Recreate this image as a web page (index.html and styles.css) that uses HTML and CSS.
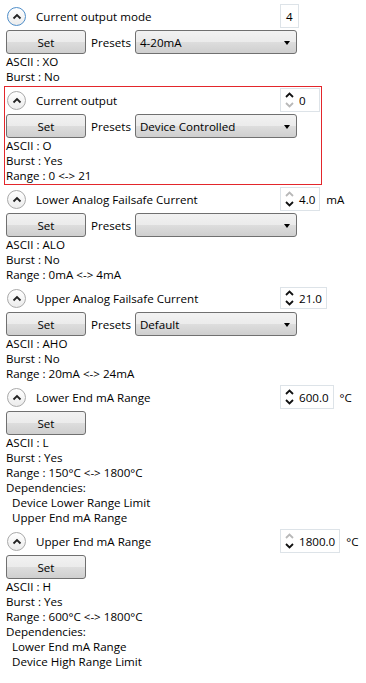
FILE: index.html
```html
<!DOCTYPE html>
<html lang="en">
<head>
  <meta charset="UTF-8" />
  <meta name="viewport" content="width=device-width, initial-scale=1.0"/>
  <title>Device Parameters</title>
  <link rel="stylesheet" href="styles.css">
</head>
<body>
  <div class="params">

    <div class="param">
      <div class="head">
        <span class="toggle focused"><svg width="10" height="7" viewBox="0 0 10 7"><path d="M1.5 5.5 L5 2 L8.5 5.5" /></svg></span>
        <span class="title">Current output mode</span>
        <span class="field plain">4</span>
      </div>
      <div class="controls">
        <button class="set">Set</button>
        <span class="presets">Presets</span>
        <div class="select">4-20mA<span class="caret"></span></div>
      </div>
      <div class="info">ASCII : XO</div>
      <div class="info">Burst : No</div>
    </div>

    <div class="param selected">
      <div class="head">
        <span class="toggle"><svg width="10" height="7" viewBox="0 0 10 7"><path d="M1.5 5.5 L5 2 L8.5 5.5" /></svg></span>
        <span class="title">Current output</span>
        <span class="field">
          <span class="spin"><svg width="9" height="18" viewBox="0 0 9 18"><path d="M1 6 L4.5 2.5 L8 6" /><path class="off" d="M1 12 L4.5 15.5 L8 12" /></svg></span>
          <span class="num">0</span>
        </span>
      </div>
      <div class="controls">
        <button class="set">Set</button>
        <span class="presets">Presets</span>
        <div class="select">Device Controlled<span class="caret"></span></div>
      </div>
      <div class="info">ASCII : O</div>
      <div class="info">Burst : Yes</div>
      <div class="info">Range : 0 &lt;-&gt; 21</div>
    </div>

    <div class="param">
      <div class="head">
        <span class="toggle"><svg width="10" height="7" viewBox="0 0 10 7"><path d="M1.5 5.5 L5 2 L8.5 5.5" /></svg></span>
        <span class="title">Lower Analog Failsafe Current</span>
        <span class="field">
          <span class="spin"><svg width="9" height="18" viewBox="0 0 9 18"><path class="off" d="M1 6 L4.5 2.5 L8 6" /><path d="M1 12 L4.5 15.5 L8 12" /></svg></span>
          <span class="num">4.0</span>
        </span>
        <span class="unit">mA</span>
      </div>
      <div class="controls">
        <button class="set">Set</button>
        <span class="presets">Presets</span>
        <div class="select"><span class="caret"></span></div>
      </div>
      <div class="info">ASCII : ALO</div>
      <div class="info">Burst : No</div>
      <div class="info">Range : 0mA &lt;-&gt; 4mA</div>
    </div>

    <div class="param">
      <div class="head">
        <span class="toggle"><svg width="10" height="7" viewBox="0 0 10 7"><path d="M1.5 5.5 L5 2 L8.5 5.5" /></svg></span>
        <span class="title">Upper Analog Failsafe Current</span>
        <span class="field short">
          <span class="spin"><svg width="9" height="18" viewBox="0 0 9 18"><path d="M1 6 L4.5 2.5 L8 6" /><path d="M1 12 L4.5 15.5 L8 12" /></svg></span>
          <span class="num">21.0</span>
        </span>
      </div>
      <div class="controls">
        <button class="set">Set</button>
        <span class="presets">Presets</span>
        <div class="select">Default<span class="caret"></span></div>
      </div>
      <div class="info">ASCII : AHO</div>
      <div class="info">Burst : No</div>
      <div class="info">Range : 20mA &lt;-&gt; 24mA</div>
    </div>

    <div class="param">
      <div class="head">
        <span class="toggle"><svg width="10" height="7" viewBox="0 0 10 7"><path d="M1.5 5.5 L5 2 L8.5 5.5" /></svg></span>
        <span class="title">Lower End mA Range</span>
        <span class="field">
          <span class="spin"><svg width="9" height="18" viewBox="0 0 9 18"><path d="M1 6 L4.5 2.5 L8 6" /><path d="M1 12 L4.5 15.5 L8 12" /></svg></span>
          <span class="num">600.0</span>
        </span>
        <span class="unit">°C</span>
      </div>
      <div class="controls">
        <button class="set">Set</button>
      </div>
      <div class="info">ASCII : L</div>
      <div class="info">Burst : Yes</div>
      <div class="info">Range : 150°C &lt;-&gt; 1800°C</div>
      <div class="info">Dependencies:</div>
      <div class="info dep">Device Lower Range Limit</div>
      <div class="info dep">Upper End mA Range</div>
    </div>

    <div class="param">
      <div class="head">
        <span class="toggle"><svg width="10" height="7" viewBox="0 0 10 7"><path d="M1.5 5.5 L5 2 L8.5 5.5" /></svg></span>
        <span class="title">Upper End mA Range</span>
        <span class="field">
          <span class="spin"><svg width="9" height="18" viewBox="0 0 9 18"><path class="off" d="M1 6 L4.5 2.5 L8 6" /><path d="M1 12 L4.5 15.5 L8 12" /></svg></span>
          <span class="num">1800.0</span>
        </span>
        <span class="unit">°C</span>
      </div>
      <div class="controls">
        <button class="set">Set</button>
      </div>
      <div class="info">ASCII : H</div>
      <div class="info">Burst : Yes</div>
      <div class="info">Range : 600°C &lt;-&gt; 1800°C</div>
      <div class="info">Dependencies:</div>
      <div class="info dep">Lower End mA Range</div>
      <div class="info dep">Device High Range Limit</div>
    </div>

  </div>
</body>
</html>
```

FILE: styles.css
```css
body {
  font-family: 'Open Sans', 'Segoe UI', sans-serif;
  font-size: 11.6px;
  background-color: #fff;
  color: #000;
  margin: 0;
  padding: 2px 0 0 0;
}

.params {
  width: 318px;
  margin-left: 4px;
}

.param {
  border: 1px solid transparent;
  padding: 1px;
}

.param.selected {
  border-color: #e3262b;
}

.head {
  display: flex;
  align-items: center;
  height: 24px;
  margin-bottom: 2px;
}

.toggle {
  flex: 0 0 auto;
  width: 17px;
  height: 17px;
  margin-left: 1px;
  border: 1px solid #a9a9a9;
  border-radius: 50%;
  background: linear-gradient(#ffffff, #ececec);
  display: flex;
  align-items: center;
  justify-content: center;
}

.toggle.focused {
  border-color: #4f8ec9;
}

.toggle svg path {
  fill: none;
  stroke: #222;
  stroke-width: 1.8;
}

.title {
  flex: 0 0 244px;
  margin-left: 10px;
}

.field {
  flex: 0 0 auto;
  box-sizing: border-box;
  height: 24px;
  min-width: 40px;
  border: 1px solid #dde3e8;
  background: #fff;
  display: flex;
  align-items: center;
  padding: 0 4px;
}

.field.plain {
  min-width: 0;
  padding: 0 5px;
}

.field.short {
  height: 22px;
}

.spin {
  display: flex;
  margin-right: 5px;
}

.spin svg path {
  fill: none;
  stroke: #111;
  stroke-width: 1.8;
}

.spin svg path.off {
  stroke: #b8b8b8;
}

.unit {
  flex: 0 0 auto;
  margin-left: 6px;
}

.controls {
  display: flex;
  align-items: center;
  width: 291px;
  height: 24px;
}

.set,
.select {
  box-sizing: border-box;
  height: 24px;
  border: 1px solid #707070;
  border-radius: 3px;
  background: linear-gradient(#f2f2f2 0%, #ebebeb 50%, #dddddd 51%, #cfcfcf 100%);
  font-family: inherit;
  font-size: inherit;
  color: #000;
}

.set {
  flex: 0 0 80px;
  padding: 0;
}

.presets {
  flex: 0 0 auto;
  white-space: nowrap;
  margin-left: 5px;
}

.select {
  position: relative;
  flex: 1 1 auto;
  margin-left: 4px;
  padding-left: 4px;
  display: flex;
  align-items: center;
}

.caret {
  position: absolute;
  right: 6px;
  top: 10px;
  width: 0;
  height: 0;
  border-left: 3.5px solid transparent;
  border-right: 3.5px solid transparent;
  border-top: 4px solid #000;
}

.info {
  line-height: 15px;
}

.info.dep {
  padding-left: 6px;
}
```
